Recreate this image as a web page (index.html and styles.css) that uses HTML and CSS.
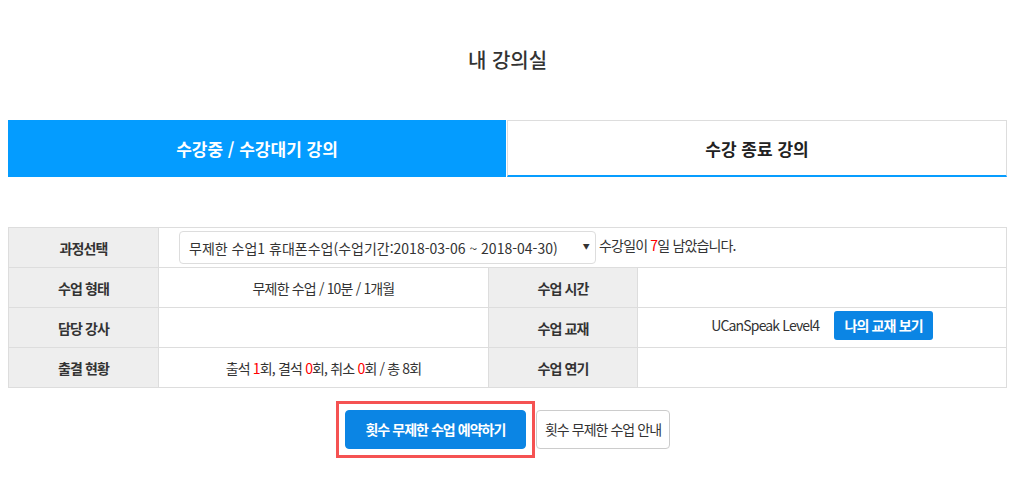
FILE: index.html
```html
<!DOCTYPE html>
<html lang="ko">

<head>
    <meta charset="UTF-8">
    <meta name="viewport" content="width=device-width, initial-scale=1.0">
    <title>내 강의실</title>
    <link rel="stylesheet" href="styles.css">
</head>

<body>
    <div class="wrap">
        <h2 class="page-title">내 강의실</h2>

        <ul class="tabs">
            <li class="tab active">수강중 / 수강대기 강의</li>
            <li class="tab">수강 종료 강의</li>
        </ul>

        <table class="class-info">
            <colgroup>
                <col style="width:150px">
                <col style="width:330px">
                <col style="width:149px">
                <col>
            </colgroup>
            <tr>
                <th>과정선택</th>
                <td colspan="3" class="left">
                    <span class="select-box">
                        <select>
                            <option>무제한 수업1 휴대폰수업(수업기간:2018-03-06 ~ 2018-04-30)</option>
                        </select>
                    </span>
                    수강일이 <em>7</em>일 남았습니다.
                </td>
            </tr>
            <tr>
                <th>수업 형태</th>
                <td>무제한 수업 / 10분 / 1개월</td>
                <th>수업 시간</th>
                <td></td>
            </tr>
            <tr>
                <th>담당 강사</th>
                <td></td>
                <th>수업 교재</th>
                <td>UCanSpeak Level4 <a class="btn-book" href="#">나의 교재 보기</a></td>
            </tr>
            <tr>
                <th>출결 현황</th>
                <td>출석 <em>1</em>회, 결석 <em>0</em>회, 취소 <em>0</em>회 / 총 8회</td>
                <th>수업 연기</th>
                <td></td>
            </tr>
        </table>

        <div class="btn-area">
            <div class="highlight">
                <a class="btn btn-primary" href="#">횟수 무제한 수업 예약하기</a>
            </div>
            <a class="btn btn-line" href="#">횟수 무제한 수업 안내</a>
        </div>
    </div>
</body>

</html>
```

FILE: styles.css
```css
* {
    box-sizing: border-box;
}

body {
    margin: 0;
    font-family: "Noto Sans CJK KR", "Noto Sans", sans-serif;
    color: #333;
    background-color: #fff;
}

.wrap {
    width: 1015px;
    padding: 0 8px;
}

.page-title {
    margin: 0;
    padding-top: 45px;
    line-height: 30px;
    font-size: 20px;
    font-weight: 500;
    text-align: center;
    color: #333;
}

.tabs {
    list-style: none;
    margin: 45px 0 0;
    padding: 0;
    display: flex;
    height: 57px;
}

.tab {
    flex: 1;
    display: flex;
    align-items: center;
    justify-content: center;
    font-size: 17px;
    font-weight: 700;
    color: #222;
    border-top: 1px solid #ddd;
    border-right: 1px solid #ddd;
    border-left: 1px solid #ddd;
    border-bottom: 2px solid #079dff;
    margin-left: 1px;
}

.tab.active {
    background-color: #049cff;
    color: #fff;
    border: none;
    margin-left: 0;
}

.class-info {
    margin-top: 50px;
    width: 100%;
    border-collapse: collapse;
    table-layout: fixed;
    font-size: 14px;
    letter-spacing: -0.06em;
}

.class-info th,
.class-info td {
    height: 40px;
    border: 1px solid #ddd;
    text-align: center;
    padding: 0;
}

.class-info th {
    background-color: #eee;
    font-weight: 700;
    color: #333;
}

.class-info td.left {
    text-align: left;
    padding-left: 20px;
}

.class-info em {
    font-style: normal;
    color: #f00;
}

.select-box {
    position: relative;
    display: inline-block;
    vertical-align: middle;
}

.select-box select {
    appearance: none;
    -webkit-appearance: none;
    width: 417px;
    height: 33px;
    padding: 0 24px 0 9px;
    border: 1px solid #ddd;
    border-radius: 4px;
    background-color: #fff;
    font-family: inherit;
    font-size: 14px;
    letter-spacing: normal;
    color: #333;
}

.select-box::after {
    content: "▼";
    position: absolute;
    right: 7px;
    top: 10px;
    font-size: 7px;
    color: #333;
    pointer-events: none;
}

.btn-book {
    display: inline-block;
    vertical-align: middle;
    margin-left: 12px;
    padding: 0 10px;
    height: 29px;
    line-height: 29px;
    border-radius: 3px;
    background-color: #0b85e4;
    color: #fff;
    font-weight: 700;
    font-size: 14px;
    text-decoration: none;
    position: relative;
    top: -2px;
}

.btn-area {
    margin-top: 13px;
    display: flex;
    justify-content: center;
    align-items: center;
    padding-right: 9px;
    letter-spacing: -0.06em;
}

.highlight {
    border: 3px solid #f55252;
    padding: 6px;
}

.btn {
    display: block;
    height: 39px;
    line-height: 37px;
    border-radius: 4px;
    font-size: 14px;
    text-decoration: none;
}

.btn-primary {
    width: 181px;
    background-color: #0b85e4;
    color: #fff;
    font-weight: 700;
    text-align: center;
    border: 1px solid #0b85e4;
}

.btn-line {
    margin-left: 1px;
    padding: 0 8px;
    border: 1px solid #ccc;
    color: #333;
    background-color: #fff;
}
```
